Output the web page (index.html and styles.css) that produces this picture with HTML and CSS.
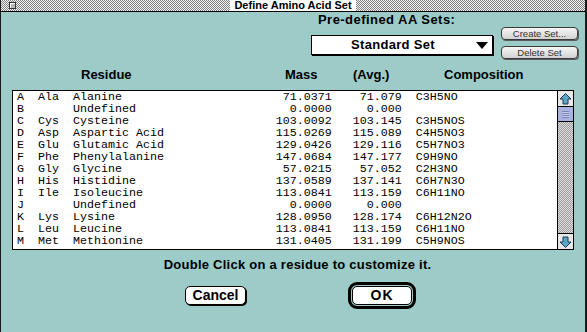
FILE: index.html
```html
<!DOCTYPE html>
<html lang="en">
<head>
  <meta charset="UTF-8" />
  <title>Define Amino Acid Set</title>
  <link rel="stylesheet" href="styles.css">
</head>
<body>
  <div class="window">
    <div class="titlebar">
      <span class="close-box"></span>
      <span class="title">Define Amino Acid Set</span>
    </div>

    <div class="top">
      <div class="aa-sets">
        <div class="aa-label">Pre-defined AA Sets:</div>
        <div class="popup">
          <span class="popup-text">Standard Set</span>
          <span class="popup-arrow"></span>
        </div>
      </div>
      <div class="set-buttons">
        <button class="small-btn">Create Set...</button>
        <button class="small-btn">Delete Set</button>
      </div>
    </div>

    <div class="col-heads">
      <span>Residue</span>
      <span>Mass</span>
      <span>(Avg.)</span>
      <span>Composition</span>
    </div>

    <div class="list">
      <div class="rows">
        <div class="row"><span>A</span><span>Ala</span><span>Alanine</span><span class="num">71.0371</span><span class="num">71.079</span><span class="comp">C3H5NO</span></div>
        <div class="row"><span>B</span><span></span><span>Undefined</span><span class="num">0.0000</span><span class="num">0.000</span><span class="comp"></span></div>
        <div class="row"><span>C</span><span>Cys</span><span>Cysteine</span><span class="num">103.0092</span><span class="num">103.145</span><span class="comp">C3H5NOS</span></div>
        <div class="row"><span>D</span><span>Asp</span><span>Aspartic Acid</span><span class="num">115.0269</span><span class="num">115.089</span><span class="comp">C4H5NO3</span></div>
        <div class="row"><span>E</span><span>Glu</span><span>Glutamic Acid</span><span class="num">129.0426</span><span class="num">129.116</span><span class="comp">C5H7NO3</span></div>
        <div class="row"><span>F</span><span>Phe</span><span>Phenylalanine</span><span class="num">147.0684</span><span class="num">147.177</span><span class="comp">C9H9NO</span></div>
        <div class="row"><span>G</span><span>Gly</span><span>Glycine</span><span class="num">57.0215</span><span class="num">57.052</span><span class="comp">C2H3NO</span></div>
        <div class="row"><span>H</span><span>His</span><span>Histidine</span><span class="num">137.0589</span><span class="num">137.141</span><span class="comp">C6H7N3O</span></div>
        <div class="row"><span>I</span><span>Ile</span><span>Isoleucine</span><span class="num">113.0841</span><span class="num">113.159</span><span class="comp">C6H11NO</span></div>
        <div class="row"><span>J</span><span></span><span>Undefined</span><span class="num">0.0000</span><span class="num">0.000</span><span class="comp"></span></div>
        <div class="row"><span>K</span><span>Lys</span><span>Lysine</span><span class="num">128.0950</span><span class="num">128.174</span><span class="comp">C6H12N2O</span></div>
        <div class="row"><span>L</span><span>Leu</span><span>Leucine</span><span class="num">113.0841</span><span class="num">113.159</span><span class="comp">C6H11NO</span></div>
        <div class="row"><span>M</span><span>Met</span><span>Methionine</span><span class="num">131.0405</span><span class="num">131.199</span><span class="comp">C5H9NOS</span></div>
      </div>
      <div class="scrollbar">
        <div class="arrow-box up">
          <svg width="13" height="12" viewBox="0 0 13 12"><path d="M6.5 0.5 L12 6 L9 6 L9 11 L4 11 L4 6 L1 6 Z" fill="#5aa6c6" stroke="#1d3a55" stroke-width="1"/></svg>
        </div>
        <div class="thumb"></div>
        <div class="track"></div>
        <div class="arrow-box down">
          <svg width="13" height="12" viewBox="0 0 13 12"><path d="M6.5 11.5 L12 6 L9 6 L9 1 L4 1 L4 6 L1 6 Z" fill="#5aa6c6" stroke="#1d3a55" stroke-width="1"/></svg>
        </div>
      </div>
    </div>

    <p class="hint">Double Click on a residue to customize it.</p>

    <div class="actions">
      <button class="btn">Cancel</button>
      <div class="default-ring"><button class="btn ok">OK</button></div>
    </div>
  </div>
</body>
</html>
```

FILE: styles.css
```css
body {
  margin: 0;
  background: #9ccbc8;
}
.window {
  width: 587px;
  height: 332px;
  box-sizing: border-box;
  border-left: 1px solid #1a1a1a;
  border-right: 2px solid #1a1a1a;
  background: #9ccbc8;
  font-family: "Liberation Sans", Arial, sans-serif;
  color: #000;
  overflow: hidden;
}
.titlebar {
  display: grid;
  grid-template-columns: 1fr auto 1fr;
  align-items: center;
  height: 11px;
  border-bottom: 1px solid #000;
  background: repeating-conic-gradient(#808080 0 25%, #f4f4f4 0 50%) 0 0 / 2px 2px;
}
.close-box {
  justify-self: start;
  margin-left: 8px;
  width: 5px;
  height: 5px;
  border: 1px solid #333;
  background: #b8b8b8;
  box-shadow: inset 1px 1px 0 #fff;
}
.title {
  background: #fff;
  padding: 0 4px;
  font-weight: bold;
  font-size: 11px;
  line-height: 11px;
  height: 11px;
}
.top {
  display: flex;
  justify-content: flex-end;
  height: 47px;
  padding-right: 7px;
}
.aa-sets {
  width: 182px;
}
.aa-label {
  padding-left: 7px;
  font-weight: bold;
  font-size: 13px;
  line-height: 15px;
  letter-spacing: 0.45px;
}
.popup {
  display: flex;
  align-items: center;
  height: 18px;
  margin-top: 8px;
  border: 1px solid #000;
  box-shadow: 1px 1px 0 #000;
  background: #fff;
}
.popup-text {
  flex: 1;
  margin-right: 2px;
  text-align: center;
  font-weight: bold;
  font-size: 13px;
  line-height: 14px;
  letter-spacing: 0.3px;
}
.popup-arrow {
  width: 0;
  height: 0;
  margin-right: 4px;
  border-left: 6px solid transparent;
  border-right: 6px solid transparent;
  border-top: 7px solid #000;
}
.set-buttons {
  width: 77px;
  margin-left: 8px;
  padding-top: 15px;
  display: flex;
  flex-direction: column;
  gap: 6px;
}
.small-btn {
  height: 13px;
  box-sizing: border-box;
  padding: 0;
  border: 1px solid #3a3a3a;
  border-radius: 4px;
  background: linear-gradient(#f6f6f6, #d2d2d2);
  box-shadow: 1px 1px 0 #5a5a5a;
  font-family: "Liberation Sans", Arial, sans-serif;
  font-size: 9.5px;
  line-height: 11px;
  color: #333;
}
.col-heads {
  display: grid;
  grid-template-columns: 204px 68px 91px auto;
  margin-top: 8px;
  padding-left: 80px;
  font-weight: bold;
  font-size: 13px;
  line-height: 15px;
}
.list {
  display: flex;
  width: 562px;
  height: 160px;
  box-sizing: border-box;
  margin: 8px 0 0 11px;
  border: 1px solid #000;
  background: #fff;
}
.rows {
  flex: 1;
  padding-left: 4px;
  font-family: "Liberation Mono", "Courier New", monospace;
  font-size: 11.667px;
  line-height: 12px;
}
.row {
  display: grid;
  grid-template-columns: 3ch 5ch 22ch 15ch 10ch auto;
  height: 12px;
  white-space: pre;
}
.num {
  text-align: right;
}
.comp {
  padding-left: 2ch;
}
.scrollbar {
  width: 15px;
  border-left: 1px solid #000;
  display: flex;
  flex-direction: column;
}
.arrow-box {
  height: 15px;
  display: flex;
  align-items: center;
  justify-content: center;
  background: #e8e8e8;
}
.arrow-box.up {
  border-bottom: 1px solid #000;
}
.arrow-box.down {
  border-top: 1px solid #000;
}
.thumb {
  height: 14px;
  border-bottom: 1px solid #000;
  background:
    repeating-linear-gradient(#7c86bd 0 1px, #c4cbef 1px 2px) center / 7px 7px no-repeat,
    #a9b3e0;
}
.track {
  flex: 1;
  background: repeating-conic-gradient(#9c9c9c 0 25%, #dedede 0 50%) 0 0 / 2px 2px;
}
.hint {
  margin: 7px 0 0;
  padding-left: 9px;
  text-align: center;
  font-weight: bold;
  font-size: 13px;
  line-height: 15px;
  letter-spacing: 0.25px;
}
.actions {
  display: flex;
  align-items: center;
  gap: 102px;
  margin-top: 10px;
  padding-left: 184px;
}
.btn {
  width: 61px;
  height: 19px;
  padding: 0;
  border: 1px solid #000;
  border-radius: 5px;
  background: #fff;
  box-shadow: 1px 1px 0 #000;
  font-family: "Liberation Sans", Arial, sans-serif;
  font-weight: bold;
  font-size: 14px;
  line-height: 17px;
  color: #000;
}
.default-ring {
  display: flex;
  padding: 1px;
  border: 3px solid #000;
  border-radius: 9px;
}
.btn.ok {
  width: 60px;
  letter-spacing: 1px;
  box-shadow: none;
}
```
